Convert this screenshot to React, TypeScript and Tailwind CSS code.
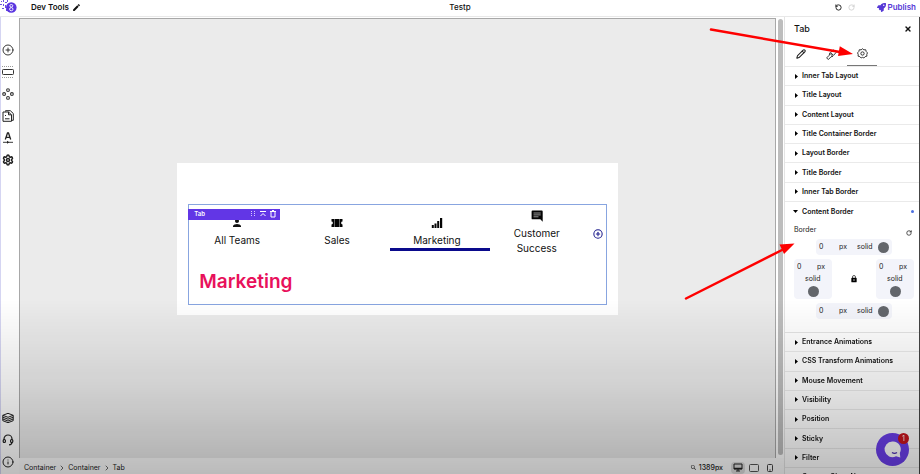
import {
  ChevronRight,
  CirclePlus,
  Info,
  Pencil,
  RotateCcw,
  RotateCw,
  Settings,
  X,
} from "lucide-react";
import { MdEdit, MdLock, MdPerson, MdSearch } from "react-icons/md";
import { FaRocket } from "react-icons/fa";

const topSections = [
  "Inner Tab Layout",
  "Title Layout",
  "Content Layout",
  "Title Container Border",
  "Layout Border",
  "Title Border",
  "Inner Tab Border",
];

const bottomSections = [
  "Entrance Animations",
  "CSS Transform Animations",
  "Mouse Movement",
  "Visibility",
  "Position",
  "Sticky",
  "Filter",
];

function Logo() {
  return (
    <svg viewBox="0 0 17 14" className="h-[14px] w-[17px]" aria-label="Home">
      <g fill="#6a50e0">
        <rect x="0" y="4" width="2" height="1" />
        <rect x="1" y="1" width="1" height="1" />
        <rect x="3" y="0" width="1" height="2" />
        <rect x="3" y="4" width="1" height="2" />
        <rect x="2" y="8" width="2" height="1" />
        <rect x="5" y="2" width="2" height="1" />
        <rect x="5" y="5" width="1" height="3" />
        <rect x="6" y="9" width="2" height="2" />
        <rect x="7" y="0" width="1" height="2" />
      </g>
      <circle cx="11.3" cy="7.500" r="5.300" fill="#5a35e0" />
      <ellipse cx="11.300" cy="5.800" rx="1.500" ry="1.300" fill="none" stroke="#fff" strokeWidth=".9" />
      <ellipse cx="11.300" cy="9.200" rx="1.700" ry="1.600" fill="none" stroke="#fff" strokeWidth=".9" />
    </svg>
  );
}

function SectionIcon() {
  return (
    <svg viewBox="0 0 12 12" className="size-3" fill="none" stroke="#333">
      <path d="M0 .5h12M0 11.500h12" strokeDasharray="1 1" stroke="#999" />
      <rect x=".5" y="3.500" width="11" height="5" rx=".8" strokeWidth="1" />
    </svg>
  );
}

function DiamondsIcon() {
  return (
    <svg viewBox="0 0 12 12" className="size-3" fill="none" stroke="#333" strokeWidth="1.100">
      <circle cx="6" cy="2.100" r="1.400" />
      <circle cx="6" cy="9.900" r="1.400" />
      <circle cx="2.100" cy="6" r="1.400" />
      <circle cx="9.900" cy="6" r="1.400" />
    </svg>
  );
}

function PagesIcon() {
  return (
    <svg viewBox="0 0 12 12" className="size-3" fill="none" stroke="#222">
      <path d="M3.500 1.500V.7h4.800l3 2.800v6.800H9.800" />
      <path d="M1 2h5.500l3 2.800v6.500H1z" />
      <path d="M6.500 2v2.800h3M3 5.500h1M3 8.800h4.500" />
    </svg>
  );
}

function FontIcon() {
  return (
    <svg viewBox="0 0 12 12" className="size-3" fill="none" stroke="#222">
      <path d="M3.300 7.500L5.500 1h1L8.700 7.500M4.200 5.300h3.600" strokeWidth="1.300" />
      <path d="M1 10.300h10" strokeWidth=".9" />
      <path d="M5 8.800l2.200 1.500L5 11.800z" fill="#222" stroke="none" />
    </svg>
  );
}

function StackIcon() {
  return (
    <svg viewBox="0 0 12 12" className="size-3" fill="none" stroke="#222">
      <path d="M.8 3.300L6 1.300l5.200 2L6 5.300z" />
      <path d="M.8 3.300v5.400L6 10.700l5.200-2V3.300M.8 5.200L6 7.200l5.200-2M.8 7L6 9l5.200-2" />
    </svg>
  );
}

function SupportIcon() {
  return (
    <svg viewBox="0 0 12 12" className="size-3" fill="none" stroke="#222" strokeWidth="1.200">
      <path d="M2 6V5a4 4 0 0 1 8 0v1M10 8c0 2-1 2.800-3 2.800" />
      <rect x="1.200" y="5.500" width="2.200" height="3" rx="1" />
      <rect x="8.600" y="5.500" width="2.200" height="3" rx="1" />
    </svg>
  );
}

function BrushIcon() {
  return (
    <svg viewBox="0 0 12 12" className="size-[11px]" fill="none" stroke="#222" strokeWidth="1">
      <path d="M5 3.800L8.200 1 11 3.800 8.200 7zM4 4.500l3.500 3.500-2 .5-3 3-1.800-1.800 2.900-2.900z" />
    </svg>
  );
}

function TicketIcon() {
  return (
    <svg viewBox="0 0 12 12" className="size-3" fill="#050505">
      <path d="M.5 2h11v2.600a1.400 1.400 0 0 0 0 2.800V10H.5V7.400a1.400 1.400 0 0 0 0-2.800z" />
      <path d="M3.500 2.500v7M8.500 2.500v7" stroke="#fff" strokeWidth=".8" strokeDasharray="1 1" />
    </svg>
  );
}

function BarsIcon() {
  return (
    <svg viewBox="0 0 12 12" className="size-3" fill="#050505">
      <path d="M.8 8h2v3h-2zM3.500 6.500h2V11h-2zM6.200 4h2v7h-2zM9 1h2.200v10H9z" />
    </svg>
  );
}

function CommentIcon() {
  return (
    <svg viewBox="0 0 12 12" className="size-3">
      <path d="M1.500.5h9.300q.9 0 .9.900v10.300L9.300 9.300H1.500q-.9 0-.9-.9v-7q0-.9.9-.9z" fill="#050505" />
      <path d="M2.500 3h7.200M2.500 4.900h7.200M2.500 6.800h5" stroke="#aaa" strokeWidth=".9" />
    </svg>
  );
}

function Header() {
  return (
    <header className="flex h-[17px] shrink-0 items-center border-b border-[#e8e8e8] bg-white pb-[2px]">
      <div className="flex flex-1 items-center">
        <Logo />
        <h1 className="ml-[14px] text-[8px] leading-3 font-semibold">Dev Tools</h1>
        <button aria-label="Rename" className="ml-[3px]">
          <MdEdit className="size-[9px]" />
        </button>
      </div>
      <p className="text-[8px] leading-3 font-medium">Testp</p>
      <div className="flex flex-1 items-center justify-end gap-[6px]">
        <button aria-label="Undo">
          <RotateCcw className="size-[7px]" strokeWidth={3} />
        </button>
        <button aria-label="Redo" className="text-[#bbb]">
          <RotateCw className="size-[7px]" strokeWidth={2} />
        </button>
        <button className="mr-1 ml-4 flex items-center gap-px text-[8px] leading-3 font-semibold text-[#5638d6]">
          <FaRocket className="size-[9px]" />
          Publish
        </button>
      </div>
    </header>
  );
}

function Sidebar() {
  return (
    <nav className="flex w-[19px] shrink-0 flex-col items-center justify-between border-l border-[#d5d5f2] bg-white pt-[27px] pr-1 pb-[6px] text-[#222]">
      <div className="flex flex-col gap-[10px]">
        <button aria-label="Add"><CirclePlus className="size-3" strokeWidth={1.8} /></button>
        <button aria-label="Sections"><SectionIcon /></button>
        <button aria-label="Components"><DiamondsIcon /></button>
        <button aria-label="Pages"><PagesIcon /></button>
        <button aria-label="Typography"><FontIcon /></button>
        <button aria-label="Settings"><Settings className="size-3" strokeWidth={3} /></button>
      </div>
      <div className="flex flex-col gap-[10px]">
        <button aria-label="Layers"><StackIcon /></button>
        <button aria-label="Support"><SupportIcon /></button>
        <button aria-label="Info"><Info className="size-3" strokeWidth={2} /></button>
      </div>
    </nav>
  );
}

function TabWidget() {
  const tab =
    "flex flex-col items-center gap-1 border-b-[3px] pr-[6px] text-[10px] leading-[15px]";

  return (
    <section className="w-7/12 bg-white px-[11px] pt-[41px] pb-[10px]">
      <div className="relative border border-[#88a5e0] pt-[5px] pb-2">
        <div className="absolute top-1 -left-px flex h-[11px] w-[92px] items-center bg-[#6236e6] pr-1 pl-[6px] text-white">
          <span className="flex-1 text-[6px] leading-2 font-semibold">Tab</span>
          <div className="flex items-center gap-[4px]">
            <button aria-label="Drag">
              <svg viewBox="0 0 6 6" className="size-[6px]" fill="#d8cbff">
                <path d="M1 0h1v1H1zM4 0h1v1H4zM1 2h1v1H1zM4 2h1v1H4zM1 4h1v1H1zM4 4h1v1H4z" />
              </svg>
            </button>
            <button aria-label="Select parent">
              <svg viewBox="0 0 6 6" className="size-[6px]" fill="none" stroke="#fff">
                <path d="M0 .5h6M.5 5L3 2.500 5.500 5" />
              </svg>
            </button>
            <button aria-label="Delete">
              <svg viewBox="0 0 6 8" className="h-[8px] w-[6px]" fill="none" stroke="#fff">
                <path d="M0 1.500h6M2 .5h2M1 2v5h4V2" />
              </svg>
            </button>
          </div>
        </div>
        <div className="flex items-center pl-px">
          <div role="tablist" className="grid flex-1 grid-cols-4 items-center">
            <button role="tab" className={`${tab} border-transparent`}>
              <MdPerson className="size-3" />
              All Teams
            </button>
            <button role="tab" className={`${tab} border-transparent`}>
              <TicketIcon />
              Sales
            </button>
            <button role="tab" aria-selected="true" className={`${tab} border-[#0a0a8c]`}>
              <BarsIcon />
              Marketing
            </button>
            <button role="tab" className={`${tab} border-transparent`}>
              <CommentIcon />
              <span>
                Customer
                <br />
                Success
              </span>
            </button>
          </div>
          <button aria-label="Add tab" className="flex w-4 justify-center text-[#1c1c8c]">
            <CirclePlus className="size-[10px]" strokeWidth={2.500} />
          </button>
        </div>
        <h2 className="mt-[9px] pl-[10px] text-[19px] leading-7 font-semibold text-[#e8115b]">
          Marketing
        </h2>
      </div>
    </section>
  );
}

function StatusBar() {
  return (
    <footer className="flex h-4 shrink-0 items-center justify-between bg-[#fdfdfd] pt-[3px] pr-[7px] pl-[5px] text-[7px] leading-3 text-[#222]">
      <div className="flex items-center gap-[2px]">
        <a href="#">Container</a>
        <ChevronRight className="size-2" />
        <a href="#">Container</a>
        <ChevronRight className="size-2" />
        <a href="#">Tab</a>
      </div>
      <div className="flex items-center gap-[2px]">
        <MdSearch className="size-[7px]" />
        <span className="mr-[6px] font-medium">1389px</span>
        <button aria-label="Desktop" className="flex h-3 w-[14px] items-center justify-center rounded-sm bg-[#dedede]">
          <svg viewBox="0 0 10 9" className="h-[9px] w-[10px]" fill="none" stroke="#222">
            <path d="M1 1h8v5H1zM3 8h4M5 6v2" />
            <path d="M1 5.500h8" strokeWidth="1.500" />
          </svg>
        </button>
        <button aria-label="Tablet" className="flex w-[14px] justify-center">
          <svg viewBox="0 0 10 8" className="h-[8px] w-[10px]" fill="none" stroke="#555">
            <rect x=".5" y=".5" width="9" height="7" rx="1" />
          </svg>
        </button>
        <button aria-label="Phone" className="flex w-[14px] justify-center">
          <svg viewBox="0 0 6 8" className="h-[8px] w-[6px]" fill="none" stroke="#444">
            <rect x=".5" y=".5" width="5" height="7" rx="1" />
            <path d="M2 6h2" strokeWidth=".7" />
          </svg>
        </button>
      </div>
    </footer>
  );
}

function SectionRow({ name }: { name: string }) {
  return (
    <button className="flex items-center gap-1 border-b border-[#eaeaea] pl-[10px] text-[7px] leading-3 font-semibold">
      <svg viewBox="0 0 3 5" className="h-[5px] w-[3px]">
        <path d="M0 0l3 2.500L0 5z" />
      </svg>
      {name}
    </button>
  );
}

function BorderRow({ side, focused = false }: { side: string; focused?: boolean }) {
  return (
    <div className="mx-auto flex h-4 w-[76px] items-center rounded-sm bg-[#f3f4fa] pr-[3px] pl-[3px]">
      <input
        aria-label={`${side} width`}
        defaultValue="0"
        autoFocus={focused}
        onFocus={(e) => e.target.setSelectionRange(1, 1)}
        className="w-5 min-w-0 outline-none"
      />
      <select aria-label={`${side} unit`} className="w-[18px] appearance-none">
        <option>px</option>
      </select>
      <select aria-label={`${side} style`} className="w-5 appearance-none">
        <option>solid</option>
      </select>
      <button aria-label={`${side} color`} className="ml-auto size-[11px] rounded-full bg-[#63666b]" />
    </div>
  );
}

function BorderCard({ side }: { side: string }) {
  return (
    <div className="flex h-10 w-[38px] flex-col items-center rounded-sm bg-[#f3f4fa] pt-[2px]">
      <div className="flex w-full justify-between pr-[5px] pl-[3px]">
        <input aria-label={`${side} width`} defaultValue="0" className="w-3 min-w-0" />
        <select aria-label={`${side} unit`} className="w-[10px] appearance-none">
          <option>px</option>
        </select>
      </div>
      <select aria-label={`${side} style`} className="w-4 appearance-none">
        <option>solid</option>
      </select>
      <button aria-label={`${side} color`} className="mt-px size-[11px] rounded-full bg-[#63666b]" />
    </div>
  );
}

function SettingsPanel() {
  return (
    <aside className="flex w-[136px] shrink-0 flex-col overflow-hidden border-r border-l border-l-[#e4e4e4] border-r-[#444] bg-white">
      <div className="flex items-center justify-between pt-[6px] pr-[7px] pl-[9px]">
        <h2 className="text-[9px] leading-3 font-medium">Tab</h2>
        <button aria-label="Close">
          <X className="size-2" strokeWidth={4} />
        </button>
      </div>
      <div role="tablist" className="flex h-8 shrink-0 border-b border-[#eaeaea] text-[#222]">
        <button role="tab" aria-label="Content" className="flex w-[31px] items-center justify-center pt-[7px]">
          <Pencil className="size-[10px]" strokeWidth={2.500} />
        </button>
        <button role="tab" aria-label="Style" className="flex w-[31px] items-center justify-center pt-[7px]">
          <BrushIcon />
        </button>
        <button role="tab" aria-label="Advanced" aria-selected="true" className="flex w-[30px] items-center justify-center border-b border-[#777] pt-[7px]">
          <svg viewBox="0 0 12 12" className="size-[11px]" fill="none" stroke="#222" strokeWidth="1">
            <path d="M6 .8l1.500 1.200 2-.1.500 1.900L11.400 5.300 10.700 7l.1 1.900-1.900.5L7.500 10.900 6 10.200l-1.500.7-1.400-1.500-1.900-.5L1.300 7 .6 5.300 2 3.800l.5-1.900 2 .1z" />
            <circle cx="6" cy="6" r="1.800" />
          </svg>
        </button>
      </div>

      <div className="grid h-[135px] shrink-0 grid-rows-7">
        {topSections.map((name) => (
          <SectionRow key={name} name={name} />
        ))}
      </div>

      <button className="flex h-[19px] shrink-0 items-center gap-1 pr-[5px] pl-[8px] text-[7px] leading-3 font-semibold">
        <svg viewBox="0 0 5 3" className="h-[3px] w-[5px]">
          <path d="M0 0h5L2.500 3z" />
        </svg>
        <span className="flex-1 text-left">Content Border</span>
        <span className="size-[3px] rounded-full bg-[#4c6fe0]" />
      </button>
      <div className="shrink-0 border-b border-[#e4e4e4] pt-[3px] pr-[5px] pb-[13px] pl-[9px] text-[7px] leading-3 text-[#222]">
        <div className="mb-[3px] flex items-end justify-between pr-[2px]">
          <span>Border</span>
          <button aria-label="Reset border">
            <RotateCw className="size-[6px]" strokeWidth={3} />
          </button>
        </div>
        <BorderRow side="Top" />
        <div className="my-1 flex items-center justify-between">
          <BorderCard side="Left" />
          <button aria-label="Link sides">
            <MdLock className="size-2 text-black" />
          </button>
          <BorderCard side="Right" />
        </div>
        <BorderRow side="Bottom" focused />
      </div>

      <div className="grid h-[135px] shrink-0 grid-rows-7">
        {bottomSections.map((name) => (
          <SectionRow key={name} name={name} />
        ))}
      </div>
      <div className="grid h-[19px] shrink-0">
        <SectionRow name="Custom Class Name" />
      </div>
    </aside>
  );
}

function ChatButton() {
  return (
    <button aria-label="Chat" className="absolute right-[11px] bottom-2 size-[33px] rounded-full bg-[#6a3eea]">
      <svg viewBox="0 0 33 33" className="size-full">
        <path d="M16.500 8.500a7.800 7.800 0 1 0 3.500 14.700l4.300 1.300-.5-4.500A7.800 7.800 0 0 0 16.500 8.500z" fill="#fff" />
        <path d="M16 19.500q2.500 1.800 5 0" fill="none" stroke="#4a2cb0" strokeWidth="1.300" />
      </svg>
      <span className="absolute top-0 right-0 size-[11px] rounded-full bg-[#c8141c] text-[7px] leading-[11px] text-white">
        1
      </span>
    </button>
  );
}

export default function App() {
  return (
    <div className="relative flex h-screen flex-col overflow-hidden bg-white font-['Inter',sans-serif] text-[#111]">
      <Header />
      <div className="flex min-h-0 flex-1">
        <Sidebar />
        <div className="flex min-w-0 flex-1 flex-col pt-px">
          <div className="flex min-h-0 flex-1">
            <main className="flex flex-1 items-center justify-center border-t border-r border-l border-[#a8a8a8] bg-[#ebebeb]">
              <TabWidget />
            </main>
            <div className="flex w-2 pt-px pb-[3px] pl-[2px]">
              <div className="w-[5px] rounded-full bg-[#bdbdbd]" />
            </div>
          </div>
          <StatusBar />
        </div>
        <SettingsPanel />
      </div>

      <svg viewBox="0 0 920 474" className="pointer-events-none absolute inset-0 h-full w-full" fill="#fe0000" stroke="#fe0000">
        <path d="M711 29.500L840 52M686 298.500L782 250" strokeWidth="2.500" strokeLinecap="round" />
        <path d="M853 54l-15 2 1.800-9.700zM794.500 243.500l-10.500 10.500-4.500-9.500z" stroke="none" />
      </svg>

      <ChatButton />

      {/* shade along the lower edge */}
      <div className="pointer-events-none absolute inset-x-0 bottom-0 h-[175px] bg-linear-to-b from-transparent via-black/11 to-black/26" />
    </div>
  );
}
